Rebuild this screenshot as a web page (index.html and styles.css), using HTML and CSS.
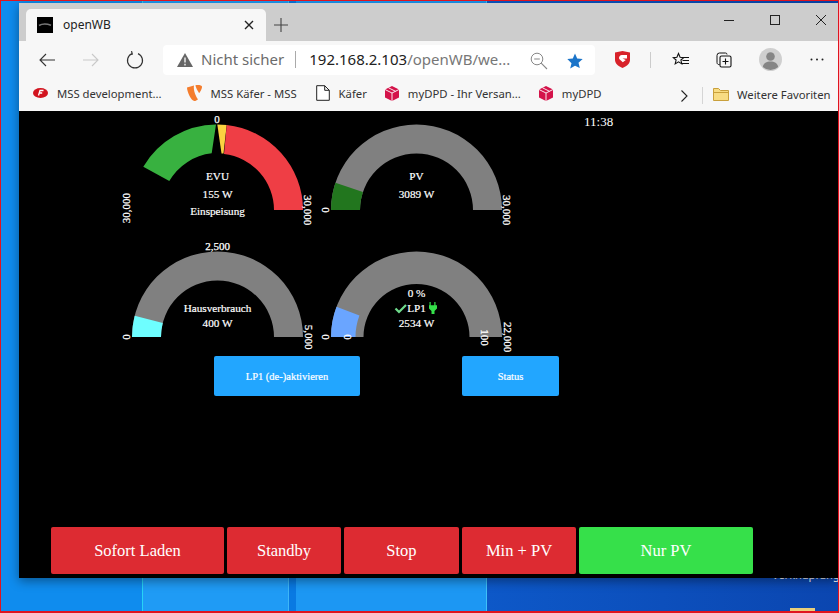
FILE: index.html
```html
<!DOCTYPE html>
<html lang="de">
<head>
<meta charset="utf-8">
<title>openWB</title>
<link rel="stylesheet" href="styles.css">
</head>
<body>
<div class="desktop">
  <div class="desk-label">Verknüpfung</div>
  <div class="desk-icon"></div>
  <div class="window">
    <div class="tabstrip">
      <div class="tab">
        <svg class="favicon" width="16" height="16" viewBox="0 0 16 16"><rect width="16" height="16" fill="#000"/><path d="M2 8.500c3-1.800 8-1.800 12-.3" stroke="#777" stroke-width="1.500" fill="none"/></svg>
        <span class="tab-title">openWB</span>
        <svg class="tab-close" width="10" height="10" viewBox="0 0 10 10"><path d="M1 1l8 8M9 1l-8 8" stroke="#222" stroke-width="1.4" fill="none"/></svg>
      </div>
      <svg class="tab-new" width="14" height="14" viewBox="0 0 14 14"><path d="M7 0v14M0 7h14" stroke="#444" stroke-width="1.1" fill="none"/></svg>
      <div class="winctl">
        <svg width="10" height="10" viewBox="0 0 10 10"><path d="M0 5.5h10" stroke="#222" fill="none"/></svg>
        <svg width="10" height="10" viewBox="0 0 10 10"><rect x=".5" y=".5" width="9" height="9" stroke="#222" fill="none"/></svg>
        <svg width="10" height="10" viewBox="0 0 10 10"><path d="M0 0l10 10M10 0L0 10" stroke="#222" fill="none"/></svg>
      </div>
    </div>
    <div class="toolbar">
      <svg class="nav nav-back" width="16" height="14" viewBox="0 0 16 14"><path d="M16 7H1M7 1L1 7l6 6" stroke="#333" stroke-width="1.1" fill="none"/></svg>
      <svg class="nav nav-fwd" width="16" height="14" viewBox="0 0 16 14"><path d="M0 7h15M9 1l6 6-6 6" stroke="#c9c9c9" stroke-width="1.1" fill="none"/></svg>
      <svg class="nav nav-reload" width="18" height="18" viewBox="0 0 18 18"><path d="M6 2.6A7.5 7.5 0 1 0 12 2.6M5.5 .2L6.3 3 3.4 3.8" stroke="#333" stroke-width="1.2" fill="none"/></svg>
      <div class="address">
        <svg class="warn" width="16" height="14" viewBox="0 0 16 14"><path d="M8 0l8 14H0z" fill="#666"/><path d="M8 4.5v5M8 10.8v1.6" stroke="#fff" stroke-width="1.3"/></svg>
        <span class="insecure">Nicht sicher</span>
        <span class="addr-sep"></span>
        <span class="url"><span class="url-host">192.168.2.103</span>/openWB/we...</span>
        <svg class="addr-zoom" width="18" height="18" viewBox="0 0 18 18"><circle cx="7" cy="7" r="5.8" stroke="#888" fill="none"/><path d="M4.2 7h5.6M11.2 11.2L17 17" stroke="#888" stroke-width="1.1" fill="none"/></svg>
        <svg class="addr-star" width="16" height="16" viewBox="0 0 16 16"><path d="M8 .5l2.2 5.1 5.5.5-4.2 3.6 1.3 5.4L8 12.7l-4.8 2.9 1.3-5.4L.3 6.1l5.5-.5z" fill="#1b74c9"/></svg>
      </div>
      <svg class="tool tool-g" width="15" height="17" viewBox="0 0 15 17"><path d="M0 1.500L7.500 0 15 1.500V9c0 3.500-3.500 6.500-7.500 8C3.500 15.500 0 12.500 0 9z" fill="#d8222a"/><path d="M12 4H7a3 3 0 0 0-2.800 4l3.600 3.300 3-2.300L7.500 7.500H12" fill="#fff"/></svg>
      <span class="tool-sep"></span>
      <svg class="tool tool-fav" width="17" height="16" viewBox="0 0 17 16"><path d="M6.500 1.500l1.600 3.800 3.600.3-2.800 2.400.9 3.900-3.300-2-3.300 2 .9-3.900L1.300 5.600l3.600-.3z" stroke="#111" stroke-width="1.100" fill="none"/><path d="M10 5.500h7M10.500 8.500h6.500M9.500 11.500H17" stroke="#111" stroke-width="1.100"/></svg>
      <svg class="tool tool-coll" width="16" height="16" viewBox="0 0 16 16"><path d="M3.500 12.500A2 2 0 0 1 1 10.500V3.500A2.500 2.500 0 0 1 3.500 1h6A1.500 1.500 0 0 1 11 2.500" stroke="#111" stroke-width="1" fill="none"/><rect x="4" y="4" width="11" height="11" rx="1.500" stroke="#111" stroke-width="1.100" fill="none"/><path d="M9.500 6.500v6M6.500 9.500h6" stroke="#111" stroke-width="1.100"/></svg>
      <svg class="tool tool-avatar" width="23" height="23" viewBox="0 0 23 23"><circle cx="11.500" cy="11.500" r="11.500" fill="#cfcfcf"/><circle cx="11.500" cy="8.500" r="4.300" fill="#858585"/><path d="M3.800 19c.7-4 3.700-5.500 7.700-5.500s7 1.500 7.700 5.500a11.500 11.500 0 0 1-15.400 0z" fill="#858585"/></svg>
      <svg class="tool tool-more" width="14" height="3" viewBox="0 0 14 3"><circle cx="1.500" cy="1.500" r="1" fill="#222"/><circle cx="7" cy="1.500" r="1" fill="#222"/><circle cx="12.500" cy="1.500" r="1" fill="#222"/></svg>
    </div>
    <div class="bookmarks">
      <a class="bm bm-mss"><svg width="15" height="10" viewBox="0 0 15 10"><ellipse cx="7.500" cy="5" rx="7.500" ry="5" fill="#d2141f"/><path d="M10.500 2.500H7L5.500 7.500M6.200 5h3" stroke="#fff" stroke-width="1.300" fill="none"/></svg>MSS development...</a>
      <a class="bm bm-typo"><svg width="15" height="16" viewBox="0 0 15 16"><path d="M0 2.500L7 .500C6 5 9 12 11 14.200 9.800 15.400 8.500 16 7.500 16 4 16 0 6.500 0 2.500z" fill="#f47c2c"/><path d="M8.500 .300c3-.5 6.500 0 6.500 1.500 0 1.700-2 6-3 6.200C10.500 6 8.500 1.800 8.500 .300z" fill="#f47c2c"/></svg>MSS Käfer - MSS</a>
      <a class="bm bm-doc"><svg width="14" height="16" viewBox="0 0 14 16"><path d="M.7.700h8l4.600 4.600v10H.7zM8.700.700v4.600h4.600" stroke="#222" stroke-width="1" fill="#fff"/></svg>Käfer</a>
      <a class="bm bm-dpd1"><svg width="14" height="15" viewBox="0 0 14 15"><path d="M7 0l7 3.500v8L7 15 0 11.500v-8z" fill="#d4134a"/><path d="M0 3.500L7 7l7-3.500M7 7v8M3.500 1.800L10.500 5.300" stroke="#fff" stroke-width=".9" fill="none"/></svg>myDPD - Ihr Versan...</a>
      <a class="bm bm-dpd2"><svg width="14" height="15" viewBox="0 0 14 15"><path d="M7 0l7 3.500v8L7 15 0 11.500v-8z" fill="#d4134a"/><path d="M0 3.500L7 7l7-3.500M7 7v8M3.500 1.800L10.500 5.300" stroke="#fff" stroke-width=".9" fill="none"/></svg>myDPD</a>
      <svg class="bm-more" width="7" height="12" viewBox="0 0 7 12"><path d="M.5.500L6 6 .5 11.500" stroke="#222" stroke-width="1.100" fill="none"/></svg>
      <span class="bm-sep"></span>
      <a class="bm bm-folder"><svg width="16" height="13" viewBox="0 0 16 13"><path d="M.500 12.500V.500h5l2 2h8v10z" fill="#f8dc83" stroke="#c9a03c"/><path d="M.500 4.500h15" stroke="#c9a03c"/></svg>Weitere Favoriten</a>
    </div>
    <main class="page">
      <div class="top">
        <div class="gauges">
          <svg class="gauge" width="199" height="127" viewBox="0 0 199 127">
            <path d="M25.300 55.700A85.500 85.500 0 0 1 98 13.500L93.700 42.300A56.500 56.500 0 0 0 51.300 70z" fill="#38b140"/>
            <path d="M99.300 13.500L108.700 14 105.500 42.500 103.500 42.500z" fill="#fbd341"/>
            <path d="M108.700 14A85.500 85.500 0 0 1 185 99H156A56.500 56.500 0 0 0 106 42.900z" fill="#ef3e45"/>
            <text class="lbl" x="99" y="12">0</text>
            <text class="lbl" transform="translate(8.700 97) rotate(-90)" dy=".33em">30,000</text>
            <text class="lbl" transform="translate(190 99) rotate(90)" dy=".33em">30,000</text>
            <text class="val" x="99.500" y="69">EVU</text>
            <text class="val" x="99.500" y="87">155 W</text>
            <text class="val" x="99.500" y="103.500">Einspeisung</text>
          </svg>
          <svg class="gauge" width="199" height="127" viewBox="0 0 199 127">
            <path d="M14 99A85.500 85.500 0 0 1 185 99H156A56.500 56.500 0 0 0 43 99z" fill="#808080"/>
            <path d="M14 99A85.500 85.500 0 0 1 18.420 71.870L45.920 81.070A56.500 56.500 0 0 0 43 99z" fill="#22761e"/>
            <text class="lbl" transform="translate(8.500 99) rotate(-90)" dy=".33em">0</text>
            <text class="lbl" transform="translate(190 99) rotate(90)" dy=".33em">30,000</text>
            <text class="val" x="99.500" y="69">PV</text>
            <text class="val" x="99.500" y="87">3089 W</text>
          </svg>
          <svg class="gauge" width="199" height="127" viewBox="0 0 199 127">
            <path d="M14 99A85.500 85.500 0 0 1 185 99H156A56.500 56.500 0 0 0 43 99z" fill="#808080"/>
            <path d="M14 99A85.500 85.500 0 0 1 16.690 77.740L44.770 84.950A56.500 56.500 0 0 0 43 99z" fill="#6efeff"/>
            <text class="lbl" x="99.500" y="12">2,500</text>
            <text class="lbl" transform="translate(8 99) rotate(-90)" dy=".33em">0</text>
            <text class="lbl" transform="translate(190.300 99) rotate(90)" dy=".33em">5,000</text>
            <text class="val" x="99.500" y="73.700">Hausverbrauch</text>
            <text class="val" x="99.500" y="88.700">400 W</text>
          </svg>
          <svg class="gauge" width="199" height="127" viewBox="0 0 199 127">
            <path d="M14 99A85.500 85.500 0 0 1 185 99H152.500A53 53 0 0 0 46.500 99z" fill="#808080"/>
            <path d="M14 99A85.500 85.500 0 0 1 19.520 68.780L42.440 77.440A61 61 0 0 0 38.500 99z" fill="#6aa5ff"/>
            <text class="lbl" transform="translate(8.300 99) rotate(-90)" dy=".33em">0</text>
            <text class="lbl" transform="translate(30.300 99) rotate(-90)" dy=".33em">0</text>
            <text class="lbl" transform="translate(168 99.500) rotate(90)" dy=".33em">100</text>
            <text class="lbl" transform="translate(190.300 99) rotate(90)" dy=".33em">22,000</text>
            <text class="val" x="99.500" y="58.700">0 %</text>
            <text class="val" x="99.500" y="73.700">LP1</text>
            <text class="val" x="99.500" y="88.700">2534 W</text>
            <path d="M78.500 70.500l3.500 3.500 7-7" stroke="#6fdc8c" stroke-width="2.200" fill="none"/>
            <path d="M112.500 64h1.200v3.200h3.600V64h1.200v3.200h1.500v3.300l-2.500 2.500V76h-3v-3l-2.500-2.500v-3.300h.5z" fill="#35e04a"/>
          </svg>
        </div>
        <div class="clock">11:38</div>
      </div>
      <div class="actions">
        <button class="btn btn-blue btn-lp">LP1 (de-)aktivieren</button>
        <button class="btn btn-blue btn-status">Status</button>
      </div>
      <div class="modes">
        <button class="btn mode mode-red">Sofort Laden</button>
        <button class="btn mode mode-red">Standby</button>
        <button class="btn mode mode-red">Stop</button>
        <button class="btn mode mode-red">Min + PV</button>
        <button class="btn mode mode-green">Nur PV</button>
      </div>
    </main>
  </div>
</div>
</body>
</html>
```
FILE: styles.css
```css
* { box-sizing: border-box; }
html, body { margin: 0; padding: 0; width: 839px; height: 613px; overflow: hidden; }
.desktop {
  position: relative;
  width: 839px;
  height: 613px;
  overflow: hidden;
  border: 1px solid #e0141e;
  border-bottom-width: 2px;
  background:
    linear-gradient(90deg, #0f8cee 0, #0f8cee 141px, #27d3f5 141px, #27d3f5 142px, #1f9bf5 142px, #1f9bf5 287px, #3eb6f7 287px, #3eb6f7 288px, #0979e2 288px, #0979e2 295px, #1c97f3 295px, #1c97f3 485px, #3fc0f8 485px, #3fc0f8 486px, #0d58c8 486px, #0b46b0 100%);
}
.desk-label {
  position: absolute;
  right: -4px;
  top: 568px;
  width: 70px;
  font: 11px/12px "Noto Sans", sans-serif;
  color: #fff;
}
.desk-icon {
  position: absolute;
  left: 789px;
  top: 607px;
  width: 25px;
  height: 5px;
  background: #e9cf7a;
}
.window {
  position: absolute;
  left: 18px;
  top: 2px;
  width: 820px;
  height: 575px;
  display: flex;
  flex-direction: column;
  box-shadow: 0 3px 10px rgba(0, 0, 0, .4);
  font-family: "Noto Sans", sans-serif;
}
.tabstrip {
  height: 38px;
  flex: none;
  background: #cdcdcd;
  display: flex;
  align-items: flex-end;
  padding-left: 7px;
}
.tab {
  width: 240px;
  height: 32px;
  background: #f7f7f7;
  border-radius: 5px 5px 0 0;
  display: flex;
  align-items: center;
  padding: 0 12px 0 11px;
}
.favicon { flex: none; }
.tab-title { margin-left: 10px; padding-bottom: 2px; font-size: 12px; color: #222; flex: 1; }
.tab-close { flex: none; }
.tab-new { margin: 0 0 9px 8px; flex: none; }
.winctl {
  margin: 0 13px 16px auto;
  display: flex;
  gap: 36px;
}
.toolbar {
  height: 37px;
  flex: none;
  background: #f7f7f7;
  display: flex;
  align-items: center;
  padding-left: 20px;
}
.nav { flex: none; }
.nav-fwd { margin-left: 28px; }
.nav-reload { margin-left: 27px; }
.address {
  width: 432px;
  height: 30px;
  margin-left: 19px;
  background: #fff;
  border-radius: 4px;
  display: flex;
  align-items: center;
  padding-left: 14px;
  flex: none;
}
.warn { flex: none; }
.insecure { margin-left: 8px; padding-bottom: 2px; font-size: 15px; color: #6b6b6b; white-space: nowrap; }
.addr-sep { width: 1px; height: 17px; background: #aaa; margin-left: 11px; flex: none; }
.url { margin-left: 13px; padding-bottom: 2px; font-size: 15px; color: #777; white-space: nowrap; }
.url-host { color: #222; }
.addr-zoom { position: absolute; left: 511px; top: 49px; }
.addr-star { position: absolute; left: 548px; top: 50px; }
.tool { flex: none; }
.tool-g { margin-left: 20px; }
.tool-sep { width: 1px; height: 16px; background: #ccc; margin-left: 20px; flex: none; }
.tool-fav { margin-left: 21px; }
.tool-coll { margin-left: 27px; }
.tool-avatar { margin-left: 27px; }
.tool-more { margin-left: 28px; }
.bookmarks {
  height: 33px;
  flex: none;
  background: #f7f7f7;
  display: flex;
  align-items: center;
  padding: 0 0 3px 14px;
  font-size: 11.300px;
  color: #333;
  white-space: nowrap;
}
.bm { display: flex; align-items: center; gap: 9px; }
.bm svg { flex: none; }
.bm-typo { margin-left: 25px; }
.bm-doc { margin-left: 19px; }
.bm-dpd1 { margin-left: 18px; }
.bm-dpd2 { margin-left: 18px; }
.bm-more { position: absolute; left: 662px; top: 87px; }
.bm-sep { position: absolute; left: 683px; top: 84px; width: 1px; height: 17px; background: #d5d5d5; }
.bm-folder { position: absolute; left: 694px; top: 83px; height: 17px; gap: 8px; }
.page {
  flex: 1;
  min-height: 0;
  background: #000;
  display: flex;
  flex-direction: column;
  color: #fff;
  font-family: "Liberation Serif", serif;
}
.top { display: flex; padding-left: 99px; }
.gauges {
  display: grid;
  grid-template-columns: 199px 199px;
  grid-auto-rows: 127px;
  width: 398px;
  flex: none;
}
.gauge { display: block; overflow: visible; }
.lbl, .val {
  font-family: "Liberation Serif", serif;
  font-size: 11px;
  fill: #fff;
  stroke: #fff;
  stroke-width: .25px;
  text-anchor: middle;
}
.val { font-size: 11.200px; stroke-width: .2px; }
.clock { margin: 3px 0 0 68px; font-size: 13px; line-height: 15px; }
.actions { display: flex; padding-left: 195px; margin-top: -9px; }
.btn {
  border: 0;
  border-radius: 2px;
  color: #fff;
  font-family: "Liberation Serif", serif;
  padding: 0;
}
.btn-blue {
  height: 40px;
  background: #22a6ff;
  font-size: 10.500px;
  -webkit-text-stroke: .2px #fff;
}
.btn-lp { width: 146px; }
.btn-status { width: 97px; margin-left: 102px; }
.modes {
  margin-top: auto;
  display: grid;
  grid-template-columns: 173px 114px 115px 114px 174px;
  gap: 3px;
  padding: 0 0 4px 32px;
}
.mode { height: 47px; font-size: 16.500px; }
.mode-red { background: #dd2b32; }
.mode-green { background: #36e04a; }
```
